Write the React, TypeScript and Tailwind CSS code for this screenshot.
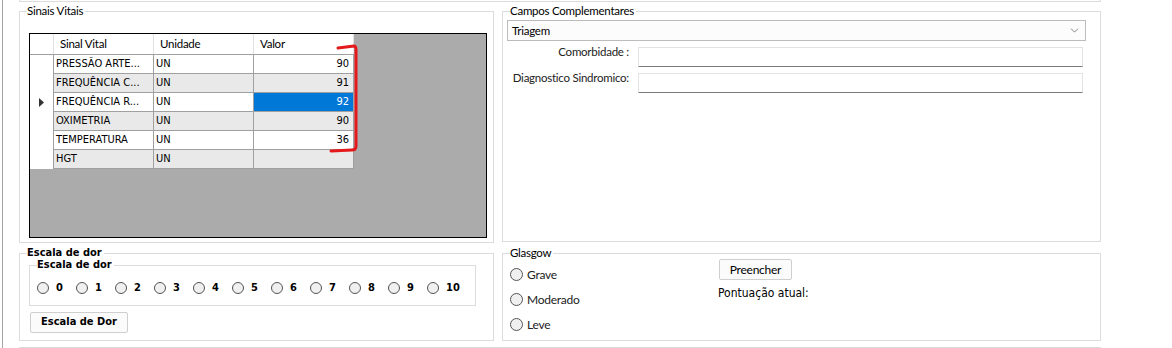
import { ChevronDown } from 'lucide-react';

const ui = "font-['Lato','Roboto',sans-serif] text-[11.5px] tracking-[-0.25px]";
const tah = "font-['DejaVu_Sans_Condensed','DejaVu_Sans',sans-serif] [font-stretch:condensed]";

const vitals = [
  { name: 'PRESSÃO ARTE...', unit: 'UN', value: '90' },
  { name: 'FREQUÊNCIA C...', unit: 'UN', value: '91' },
  { name: 'FREQUÊNCIA R...', unit: 'UN', value: '92', selected: true },
  { name: 'OXIMETRIA', unit: 'UN', value: '90' },
  { name: 'TEMPERATURA', unit: 'UN', value: '36' },
  { name: 'HGT', unit: 'UN', value: '' },
];

const GroupBox = ({ title, bold, className, children }: { title: string; bold?: boolean; className: string; children: React.ReactNode }) => (
  <div className={`relative border border-[#dcdcdc] ${className}`}>
    <span
      className={`absolute -top-[8px] left-[7px] whitespace-nowrap bg-white pr-[2px] leading-[14px] text-black ${
        bold ? `${tah} text-[11px] font-bold` : ui
      }`}
    >
      {title}
    </span>
    {children}
  </div>
);

const Radio = ({ size = 13 }: { size?: number }) => (
  <span
    className="inline-block shrink-0 rounded-full border border-[#555] bg-[#f0f0f0]"
    style={{ width: size, height: size }}
  />
);

const VitalsGrid = () => (
  <div className="relative h-[205px] w-[458px] border border-black bg-[#ababab]">
    <div className="w-[324px]">
      {/* header */}
      <div className={`flex h-[21px] border-b border-[#a0a0a0] bg-white text-black ${ui}`}>
        <div className="w-[24px] border-r border-[#e2e2e2]" />
        <div className="w-[100px] border-r border-[#e2e2e2] pl-[6px] leading-[20px]">Sinal Vital</div>
        <div className="w-[100px] border-r border-[#e2e2e2] pl-[6px] leading-[20px]">Unidade</div>
        <div className="w-[100px] border-r border-[#e2e2e2] pl-[6px] leading-[20px]">Valor</div>
      </div>
      {vitals.map((v, i) => (
        <div key={i} className={`flex h-[19px] text-[11px] leading-[18px] text-black ${tah}`}>
          <div className="flex w-[24px] items-center justify-center border-r border-[#a0a0a0] bg-white">
            {v.selected && (
              <svg width="5" height="9" viewBox="0 0 5 9">
                <path d="M0 0 L5 4.5 L0 9 Z" fill="#333" />
              </svg>
            )}
          </div>
          {[v.name, v.unit].map((t, j) => (
            <div
              key={j}
              className={`w-[100px] border-b border-r border-[#a0a0a0] pl-[2px] ${i % 2 ? 'bg-[#e9e9e9]' : 'bg-white'}`}
            >
              {t}
            </div>
          ))}
          <div
            className={`w-[100px] border-b border-r border-[#a0a0a0] pr-[4px] text-right ${
              v.selected ? 'bg-[#0078d7] text-white' : i % 2 ? 'bg-[#e9e9e9]' : 'bg-white'
            }`}
          >
            {v.value}
          </div>
        </div>
      ))}
    </div>
    {/* red annotation bracket */}
    <svg className="absolute left-[296px] top-[8px]" width="40" height="115" viewBox="0 0 40 115">
      <path
        d="M12 6 Q20 5 28 4 Q30 4 30 8 L30 104 Q30 108 26 108 L5 109"
        fill="none"
        stroke="#e3191c"
        strokeWidth="3"
        strokeLinecap="round"
        strokeLinejoin="round"
      />
    </svg>
  </div>
);

const TextBox = () => (
  <div className="h-[20px] w-[445px] border border-[#e3e3e3] border-b-[#7a7a7a] bg-white" />
);

export default function App() {
  return (
    <div className="flex h-[348px] w-[1172px] overflow-hidden bg-white">
      <div className="ml-[2px] h-full border-l border-[#a5a5a5]" />
      <div className="flex flex-col pl-[16px]">
        <div className="h-[2px] w-[1082px] border-x border-b border-[#dcdcdc]" />

        <div className="mt-[9px] flex gap-[8px]">
          <GroupBox title="Sinais Vitais" className="h-[232px] w-[475px] pl-[9px] pt-[21px]">
            <VitalsGrid />
          </GroupBox>

          <GroupBox title="Campos Complementares" className="h-[231px] w-[599px] pl-[4px] pt-[8px]">
            <div className={`flex h-[21px] w-[579px] items-center justify-between border border-[#bcbcbc] bg-[#fcfcfc] pl-[4px] pr-[4px] text-black ${ui}`}>
              <span>Triagem</span>
              <ChevronDown size={13} strokeWidth={1.3} className="text-[#555]" />
            </div>
            <div className={`mt-[3px] flex leading-[16px] text-[#222] ${ui}`}>
              <div className="w-[122px] whitespace-nowrap text-right">Comorbidade :</div>
              <div className="ml-[9px] mt-[3px]">
                <TextBox />
              </div>
            </div>
            <div className={`mt-[3px] flex leading-[16px] text-[#222] ${ui}`}>
              <div className="w-[122px] whitespace-nowrap text-right">Diagnostico Sindromico:</div>
              <div className="ml-[9px] mt-[3px]">
                <TextBox />
              </div>
            </div>
          </GroupBox>
        </div>

        <div className="mt-[10px] flex gap-[8px]">
          <GroupBox title="Escala de dor" bold className="h-[88px] w-[475px] pl-[9px] pt-[11px]">
            <GroupBox title="Escala de dor" bold className="h-[41px] w-[447px] pl-[7px] pt-[16px]">
              <div className={`flex text-[11px] font-bold leading-[12px] text-black ${tah}`}>
                {Array.from({ length: 11 }, (_, n) => (
                  <div key={n} className="flex w-[39px] items-center gap-[7px]">
                    <Radio size={12} />
                    <span>{n}</span>
                  </div>
                ))}
              </div>
            </GroupBox>
            <button
              className={`mt-[6px] ml-[1px] h-[21px] w-[98px] rounded-[2px] border border-[#cfcfcf] bg-[#fbfbfb] text-[11px] font-bold text-black ${tah}`}
            >
              Escala de Dor
            </button>
          </GroupBox>

          <GroupBox title="Glasgow" className="flex h-[88px] w-[599px] pl-[7px]">
            <div className={`flex w-[208px] flex-col gap-[12px] pt-[14px] leading-[13px] text-[#222] ${ui} text-[12px]`}>
              {['Grave', 'Moderado', 'Leve'].map((l) => (
                <div key={l} className="flex items-center gap-[4px]">
                  <Radio />
                  <span>{l}</span>
                </div>
              ))}
            </div>
            <div className="flex flex-col pt-[5px]">
              <button
                className={`ml-[1px] h-[21px] w-[73px] rounded-[2px] border border-[#cfcfcf] bg-[#fbfbfb] text-black ${ui} text-[12px]`}
              >
                Preencher
              </button>
              <div className={`mt-[5px] text-[12px] leading-[16px] text-black ${tah}`}>Pontuação atual:</div>
            </div>
          </GroupBox>
        </div>

        <div className="mt-[6px] w-[1082px] border-t border-[#dcdcdc]" />
      </div>
    </div>
  );
}
